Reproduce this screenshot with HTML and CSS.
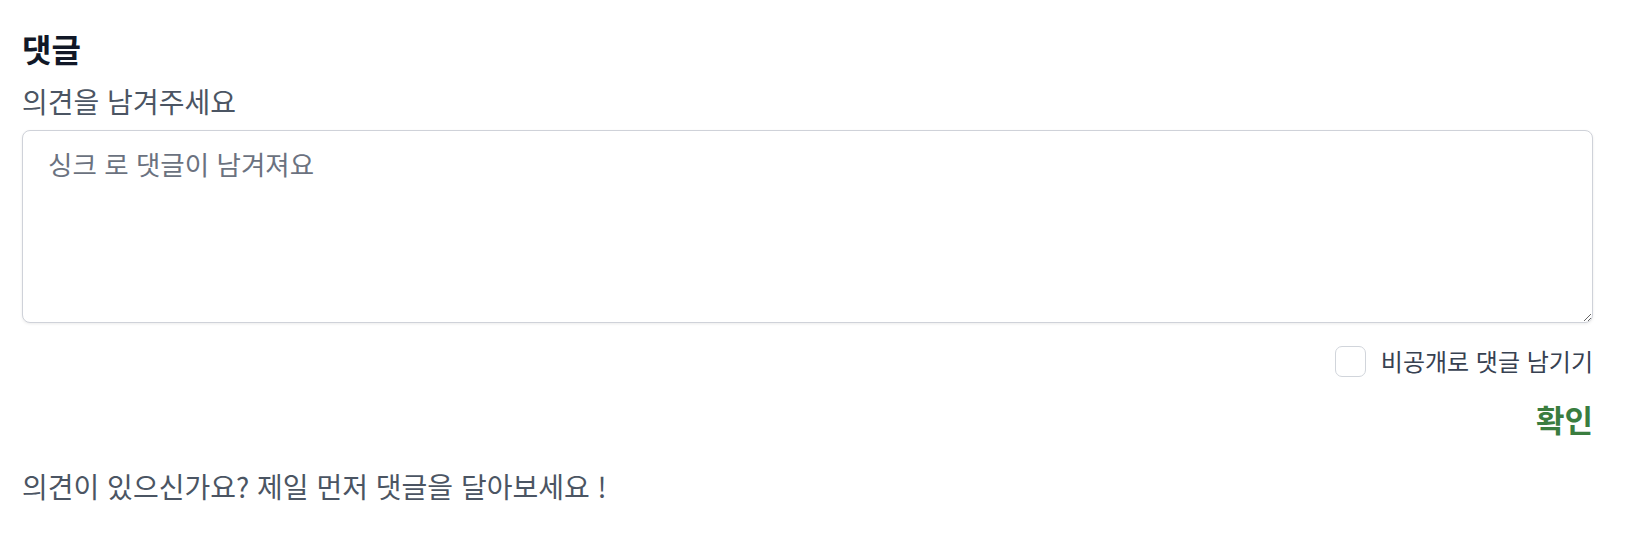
FILE: index.html
```html
<!DOCTYPE html>
<html lang="ko">
<head>
<meta charset="utf-8">
<link rel="stylesheet" href="styles.css">
</head>
<body>
<section class="comments">
  <h2 class="title">댓글</h2>
  <label class="field-label" for="comment">의견을 남겨주세요</label>
  <textarea id="comment" class="comment-input" placeholder="싱크 로 댓글이 남겨져요"></textarea>
  <div class="options">
    <label class="private">
      <input type="checkbox" class="private-box">
      <span class="private-text">비공개로 댓글 남기기</span>
    </label>
  </div>
  <div class="actions">
    <button class="submit" type="button">확인</button>
  </div>
  <p class="empty">의견이 있으신가요? 제일 먼저 댓글을 달아보세요 !</p>
</section>
</body>
</html>
```

FILE: styles.css
```css
* { box-sizing: border-box; }
html, body { margin: 0; background: #ffffff; }
body {
  font-family: "Noto Sans CJK KR", "Noto Sans", sans-serif;
}
.comments {
  display: flex;
  flex-direction: column;
  padding: 28px 37px 0 22px;
}
.title {
  margin: 0;
  font-size: 32px;
  line-height: 40px;
  font-weight: 700;
  color: #111827;
}
.field-label {
  margin-top: 15px;
  font-size: 28px;
  line-height: 36px;
  color: #4b5563;
}
.comment-input {
  margin-top: 11px;
  height: 193px;
  width: 100%;
  padding: 15px 25px;
  border: 1.5px solid #cfd2d9;
  border-radius: 8px;
  box-shadow: 0 1px 3px rgba(0,0,0,0.08);
  font-family: inherit;
  font-size: 26.5px;
  line-height: 36px;
  color: #111827;
  resize: vertical;
  outline: none;
}
.comment-input::placeholder { color: #6b7280; }
.options {
  display: flex;
  justify-content: flex-end;
  margin-top: 22px;
}
.private {
  display: flex;
  align-items: center;
  gap: 15px;
  height: 32px;
}
.private-box {
  appearance: none;
  -webkit-appearance: none;
  margin: 0;
  width: 31px;
  height: 31px;
  border: 1.5px solid #d1d5db;
  border-radius: 7px;
  background: #fff;
}
.private-text {
  font-size: 24px;
  line-height: 32px;
  color: #374151;
}
.actions {
  display: flex;
  justify-content: flex-end;
  margin-top: 22px;
}
.submit {
  border: 0;
  background: none;
  padding: 0;
  font-family: inherit;
  font-size: 31px;
  line-height: 40px;
  font-weight: 700;
  color: #3a7d3f;
}
.empty {
  margin: 29px 0 0;
  font-size: 28px;
  line-height: 36px;
  color: #4b5563;
}
```
